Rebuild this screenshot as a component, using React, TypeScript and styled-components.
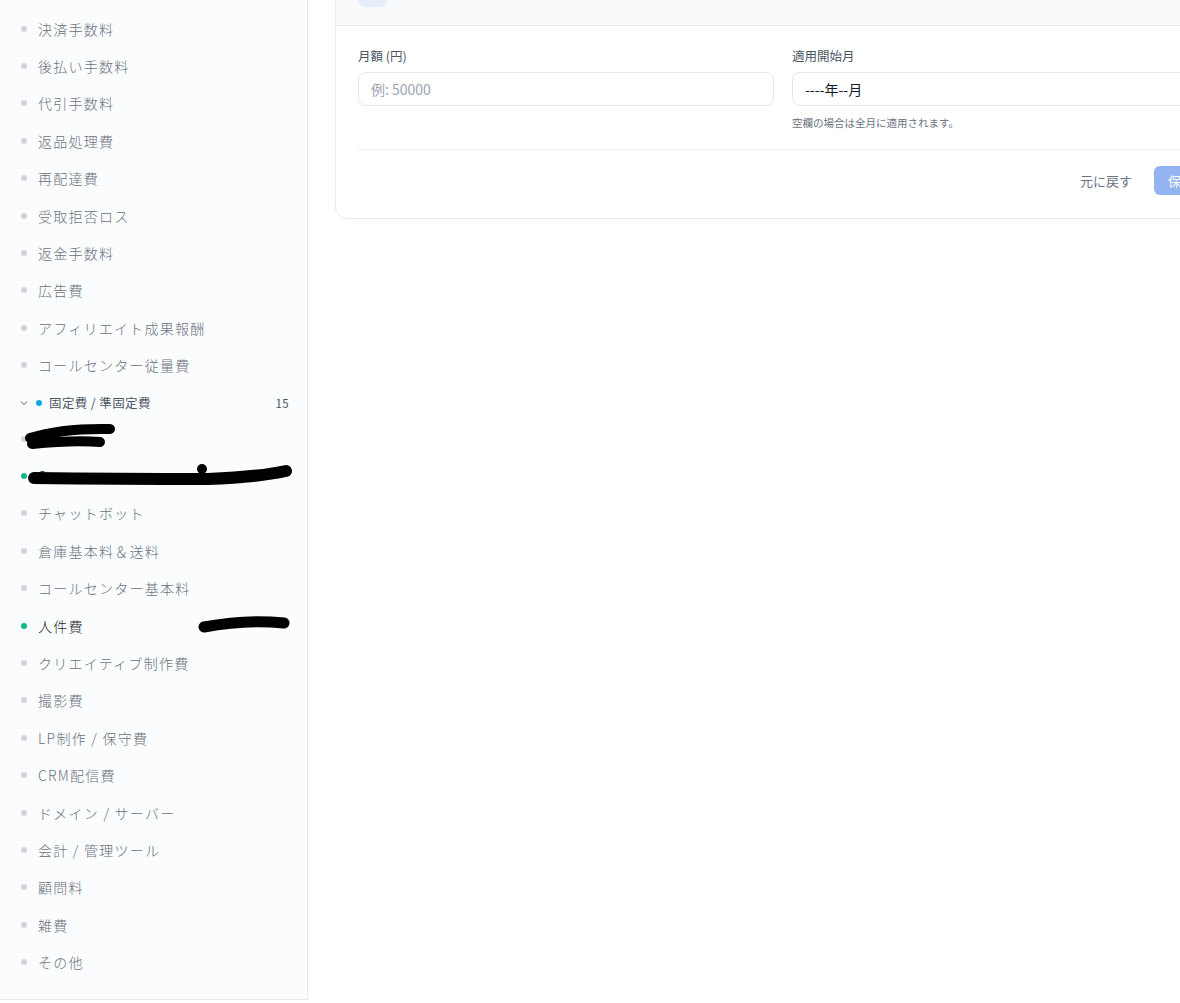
import React from "react";
import styled, { createGlobalStyle } from "styled-components";

const Global = createGlobalStyle`
  html, body { margin: 0; padding: 0; overflow: hidden; background: #fff; }
  body { font-family: "Noto Sans CJK JP", "Noto Sans", sans-serif; }
`;

const Page = styled.div`
  display: flex;
  width: 1180px;
  height: 1003px;
  overflow: hidden;
`;
const Sidebar = styled.aside`
  width: 308px;
  flex: none;
  height: 1000px;
  background: #fbfcfd;
  border-right: 1px solid #e8eaee;
  border-bottom: 1px solid #e8eaee;
  box-sizing: border-box;
  padding: 10px 18px 0 18px;
`;
const Item = styled.div<{ $active?: boolean }>`
  position: relative;
  display: flex;
  align-items: center;
  height: 37.4px;
  font-size: 14px;
  font-weight: 300;
  color: ${p => (p.$active ? "#1f2937" : "#6b7280")};
  letter-spacing: 0.09em;
`;
const Dot = styled.span<{ $c: string }>`
  width: 6px; height: 6px; border-radius: 50%;
  background: ${p => p.$c};
  margin: 0 11px 0 3px;
  flex: none;
`;
const Group = styled.div`
  display: flex;
  align-items: center;
  height: 34px;
  margin-top: 2px;
  font-size: 12.5px;
  color: #4b5563;
  letter-spacing: 0.03em;
`;
const Count = styled.span`
  margin-left: auto;
  font-size: 11.5px;
  color: #4b5563;
`;
const Blot = styled.svg`
  position: absolute;
  pointer-events: none;
`;
const Main = styled.main`
  flex: 1;
  padding: 0 0 0 27px;
  overflow: hidden;
`;
const Card = styled.section`
  width: 900px;
  margin-top: -30px;
  border: 1px solid #e8eaee;
  border-radius: 12px;
  background: #fff;
  overflow: hidden;
`;
const CardHead = styled.div`
  height: 55px;
  background: #f8fafc;
  border-bottom: 1px solid #e8eaee;
  display: flex;
  align-items: flex-end;
  padding: 0 22px 18px;
  box-sizing: border-box;
  gap: 10px;
`;
const IconBox = styled.div`
  width: 30px; height: 30px; border-radius: 8px; background: #e6eefc;
`;
const Sub = styled.div`
  font-size: 11px; color: #6b7280; margin-bottom: 14px;
`;
const Body = styled.div`
  padding: 20px 22px 23px;
`;
const Grid = styled.div`
  display: grid;
  grid-template-columns: 416px 1fr;
  gap: 18px;
`;
const Label = styled.div`
  font-size: 12.5px; color: #4b5563; margin-bottom: 7px;
`;
const Input = styled.div<{ $ph?: boolean }>`
  height: 34px;
  border: 1px solid #e3e6ea;
  border-radius: 8px;
  box-sizing: border-box;
  display: flex; align-items: center;
  padding: 0 12px;
  font-size: 14px;
  color: ${p => (p.$ph ? "#9ca3af" : "#111827")};
`;
const Hint = styled.div`
  font-size: 10.5px; color: #6b7280; margin-top: 9px;
`;
const Divider = styled.div`
  height: 1px; background: #eceef1; margin-top: 19px;
`;
const Actions = styled.div`
  display: flex; justify-content: flex-start; align-items: center;
  gap: 22px; margin-top: 16px; padding-left: 722px;
`;
const Ghost = styled.span`font-size: 13px; color: #6b7280;`;
const Primary = styled.span`
  background: #93b3f2; color: #fff; font-size: 13px;
  border-radius: 6px; padding: 5px 14px; white-space: nowrap;
`;

const top = ["決済手数料","後払い手数料","代引手数料","返品処理費","再配達費","受取拒否ロス","返金手数料","広告費","アフィリエイト成果報酬","コールセンター従量費"];
const gray = "#d1d5db";
const green = "#10b981";

export default function App() {
  return (
    <Page>
      <Global />
      <Sidebar>
        {top.map(t => <Item key={t}><Dot $c={gray} />{t}</Item>)}
        <Group>
          <svg width="12" height="12" viewBox="0 0 24 24" fill="none" stroke="#4b5563" strokeWidth="2"><path d="m6 9 6 6 6-6"/></svg>
          <Dot $c="#0ea5e9" style={{ marginLeft: 6, marginRight: 7 }} />
          固定費 / 準固定費
          <Count>15</Count>
        </Group>
        <Item>
          <Dot $c={gray} />日
          <Blot width="100" height="30" viewBox="0 0 100 30" style={{ left: 4, top: 2 }}>
            <path d="M8 16 Q40 6 88 7 M10 22 Q50 18 78 20" stroke="#000" strokeWidth="10" strokeLinecap="round" fill="none"/>
          </Blot>
        </Item>
        <Item $active>
          <Dot $c={green} />S
          <Blot width="270" height="30" viewBox="0 0 270 30" style={{ left: 10, top: 4 }}>
            <path d="M6 17 Q90 18 180 18 Q230 16 258 10" stroke="#000" strokeWidth="12" strokeLinecap="round" fill="none"/>
            <circle cx="174" cy="8" r="5" fill="#000"/>
          </Blot>
        </Item>
        <Item><Dot $c={gray} />チャットボット</Item>
        <Item><Dot $c={gray} />倉庫基本料＆送料</Item>
        <Item><Dot $c={gray} />コールセンター基本料</Item>
        <Item $active>
          <Dot $c={green} />人件費
          <Blot width="100" height="20" viewBox="0 0 100 20" style={{ left: 178, top: 8 }}>
            <path d="M8 12 Q50 4 88 8" stroke="#000" strokeWidth="11" strokeLinecap="round" fill="none"/>
          </Blot>
        </Item>
        {["クリエイティブ制作費","撮影費","LP制作 / 保守費","CRM配信費","ドメイン / サーバー","会計 / 管理ツール","顧問料","雑費","その他"].map(t => <Item key={t}><Dot $c={gray} />{t}</Item>)}
      </Sidebar>
      <Main>
        <Card>
          <CardHead>
            <IconBox />
            <Sub>月額を設定します</Sub>
          </CardHead>
          <Body>
            <Grid>
              <div>
                <Label>月額 (円)</Label>
                <Input $ph>例: 50000</Input>
              </div>
              <div>
                <Label>適用開始月</Label>
                <Input>----年--月</Input>
                <Hint>空欄の場合は全月に適用されます。</Hint>
              </div>
            </Grid>
            <Divider />
            <Actions>
              <Ghost>元に戻す</Ghost>
              <Primary>保存</Primary>
            </Actions>
          </Body>
        </Card>
      </Main>
    </Page>
  );
}
